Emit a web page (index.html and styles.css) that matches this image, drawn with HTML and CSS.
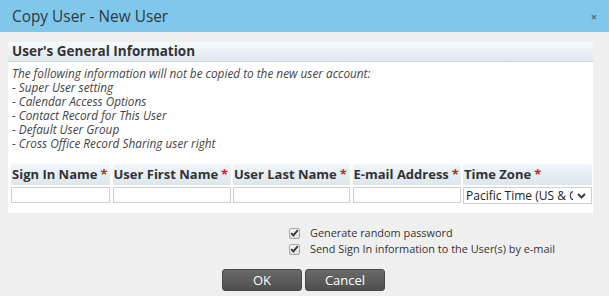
FILE: index.html
```html
<!DOCTYPE html>
<html>
<head>
<meta charset="utf-8">
<link rel="stylesheet" href="styles.css">
</head>
<body>
<div class="dialog">
  <div class="titlebar">
    <span class="title">Copy User - New User</span>
    <span class="close">×</span>
  </div>
  <div class="content">
    <div class="panel">
      <div class="panel-head">User's General Information</div>
      <div class="notes">
        <div>The following information will not be copied to the new user account:</div>
        <div>- Super User setting</div>
        <div>- Calendar Access Options</div>
        <div>- Contact Record for This User</div>
        <div>- Default User Group</div>
        <div>- Cross Office Record Sharing user right</div>
      </div>
      <div class="grid">
        <div class="th">Sign In Name<span class="req">*</span></div>
        <div class="th">User First Name<span class="req">*</span></div>
        <div class="th">User Last Name<span class="req">*</span></div>
        <div class="th">E-mail Address<span class="req">*</span></div>
        <div class="th">Time Zone<span class="req">*</span></div>
        <div class="input"></div>
        <div class="input"></div>
        <div class="input"></div>
        <div class="input"></div>
        <div class="input select"><span class="sel-text">Pacific Time (US &amp; Canada)</span><svg class="chev" width="9" height="6" viewBox="0 0 9 6"><path d="M1 1 L4.5 4.5 L8 1" fill="none" stroke="#333" stroke-width="1.8"/></svg></div>
      </div>
    </div>
    <div class="checks">
      <label class="check"><span class="box"><svg width="9" height="8" viewBox="0 0 9 8"><path d="M1.2 4.2 L3.4 6.4 L7.8 1.2" fill="none" stroke="#333" stroke-width="1.8"/></svg></span>Generate random password</label>
      <label class="check"><span class="box"><svg width="9" height="8" viewBox="0 0 9 8"><path d="M1.2 4.2 L3.4 6.4 L7.8 1.2" fill="none" stroke="#333" stroke-width="1.8"/></svg></span>Send Sign In information to the User(s) by e-mail</label>
    </div>
    <div class="buttons">
      <button class="btn ok">OK</button>
      <button class="btn">Cancel</button>
    </div>
  </div>
</div>
</body>
</html>
```
FILE: styles.css
```css
html, body {
  margin: 0;
  padding: 0;
}
body {
  width: 609px;
  height: 296px;
  overflow: hidden;
  font-family: "Open Sans", "DejaVu Sans", sans-serif;
  background: #efefef;
  color: #333;
}
.dialog {
  width: 609px;
  height: 296px;
  display: flex;
  flex-direction: column;
}
.titlebar {
  height: 32px;
  background: #7fc8ec;
  display: flex;
  align-items: center;
  justify-content: space-between;
  padding: 0 12px 0 12px;
  box-sizing: border-box;
}
.title {
  font-size: 15.4px;
  color: #2f3a40;
  margin-top: 1px;
}
.close {
  font-size: 11px;
  font-weight: bold;
  color: #4b6f85;
}
.content {
  flex: 1;
  padding: 10px 16px 0 8px;
  display: flex;
  flex-direction: column;
}
.panel {
  background: #fff;
  height: 171px;
  box-sizing: border-box;
}
.panel-head {
  height: 20px;
  box-sizing: border-box;
  background: linear-gradient(#f7fafb, #dfe8ee);
  border-bottom: 1px solid #cbd5dc;
  font-size: 13.5px;
  font-weight: bold;
  line-height: 19px;
  padding-left: 4px;
  color: #333;
}
.notes {
  padding: 4px 0 0 4px;
  font-size: 11.8px;
  font-style: italic;
  line-height: 14px;
  color: #444;
  height: 102px;
  box-sizing: border-box;
}
.grid {
  display: grid;
  grid-template-columns: 99px 118px 117px 108px 129px;
  column-gap: 2.5px;
  row-gap: 2px;
  padding-left: 3px;
}
.th {
  height: 21px;
  background: linear-gradient(#f1f6f9, #dce6ed);
  border-radius: 3px 3px 0 0;
  font-size: 13px;
  font-weight: bold;
  line-height: 21px;
  padding-left: 1px;
  white-space: nowrap;
  overflow: hidden;
  color: #333;
}
.req {
  color: #e8151b;
  margin-left: 3px;
}
.input {
  height: 16px;
  border: 1px solid #cfcfcf;
  background: #fff;
  box-sizing: border-box;
}
.select {
  display: flex;
  align-items: center;
  padding: 0 5px 0 2px;
  font-size: 12px;
  color: #222;
  height: 17px;
}
.sel-text {
  flex: 1;
  white-space: nowrap;
  overflow: hidden;
  line-height: 15px;
}
.chev {
  margin-left: 4px;
  flex: none;
}
.checks {
  margin-top: 12px;
  padding-left: 281px;
  display: flex;
  flex-direction: column;
  gap: 0;
}
.check {
  display: flex;
  align-items: center;
  font-size: 10.9px;
  line-height: 16px;
  color: #333;
}
.box {
  width: 11px;
  height: 11px;
  box-sizing: border-box;
  border: 1px solid #a9a9a9;
  border-radius: 2px;
  background: linear-gradient(#fafafa, #dcdcdc);
  display: flex;
  align-items: center;
  justify-content: center;
  margin-right: 10px;
}
.buttons {
  margin-top: 12px;
  padding-left: 214px;
  display: flex;
  gap: 3px;
}
.btn {
  width: 80px;
  height: 22px;
  border: 1px solid #474747;
  border-radius: 3px;
  background: linear-gradient(#6a6a6a, #4f4f4f);
  color: #fff;
  font-family: "Open Sans", "DejaVu Sans", sans-serif;
  font-size: 13px;
  padding: 0;
  line-height: 20px;
}
```
